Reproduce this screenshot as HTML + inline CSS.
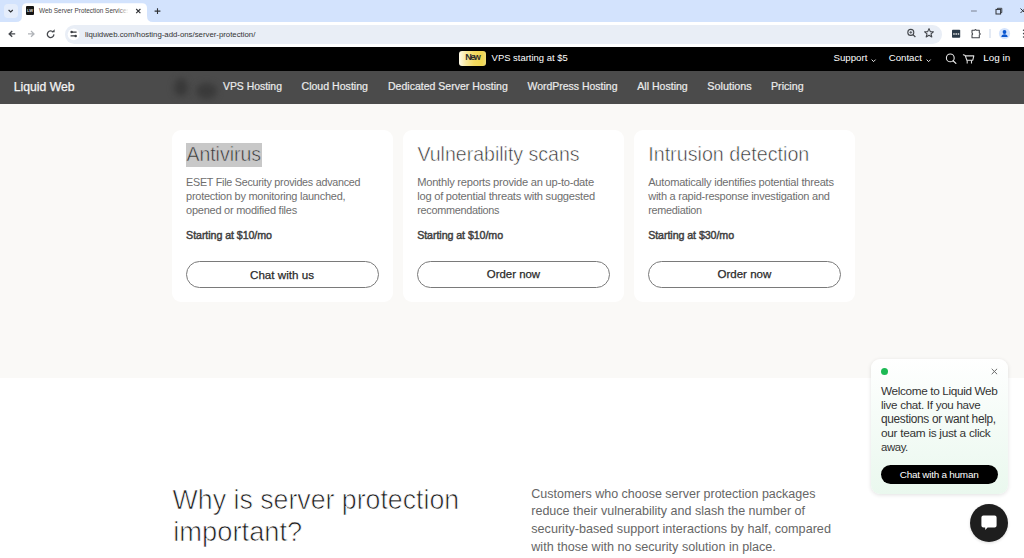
<!DOCTYPE html>
<html><head><meta charset="utf-8"><style>
html,body{margin:0;padding:0;width:1024px;height:558px;overflow:hidden;background:#fff;position:relative;font-family:"Liberation Sans",sans-serif}
.t{position:absolute;white-space:nowrap;font-family:"Liberation Sans",sans-serif}
.a{position:absolute}
</style></head><body>
<!-- tab strip -->
<div class="a" style="left:0;top:0;width:1024px;height:22px;background:#d3e3fd"></div>
<div class="a" style="left:3.5px;top:3.5px;width:14.5px;height:14.5px;border-radius:4px;background:#e5edfb"></div>
<svg class="a" style="left:0;top:0" width="1024" height="24">
  <path d="M8.6 10 L10.7 12 L12.8 10" fill="none" stroke="#2d2f33" stroke-width="1.1"/>
  <!-- tab shape -->
  <path d="M16 22 Q22 22 22 16 L22 8 Q22 3.2 27 3.2 L142 3.2 Q147 3.2 147 8 L147 16 Q147 22 153 22 Z" fill="#fff"/>
  <!-- close x -->
  <path d="M136.2 9 L140.4 13.2 M140.4 9 L136.2 13.2" stroke="#303236" stroke-width="1.1"/>
  <!-- plus -->
  <path d="M157.5 8.2 V14 M154.6 11.1 H160.4" stroke="#303236" stroke-width="1.1"/>
  <!-- window controls -->
  <path d="M971 11 H976.8" stroke="#7a8190" stroke-width="1"/>
  <rect x="996" y="9.4" width="4.6" height="4.6" fill="none" stroke="#303236" stroke-width="1"/>
  <path d="M997.5 9.4 V8.3 H1001.8 V12.6 H1000.6" fill="none" stroke="#303236" stroke-width="0.9"/>
  <path d="M1020.5 8.5 L1025 13 M1025 8.5 L1020.5 13" stroke="#303236" stroke-width="1"/>
</svg>
<div class="a" style="left:25.7px;top:6.4px;width:8.6px;height:8.5px;background:#141414;border-radius:1px"></div>
<div class="a" style="left:25.7px;top:8.2px;width:8.6px;font-size:4px;line-height:5px;color:#ddd;text-align:center;font-family:'Liberation Sans',sans-serif;font-weight:bold">LW</div>
<div class="a" style="left:118px;top:4px;width:14px;height:14px;background:linear-gradient(to right,rgba(255,255,255,0),#fff 75%);z-index:5"></div>
<!-- toolbar -->
<div class="a" style="left:0;top:22px;width:1024px;height:24.5px;background:#fff"></div>
<div class="a" style="left:65.2px;top:25px;width:876.7px;height:18.6px;border-radius:9.3px;background:#e9eef6"></div>
<svg class="a" style="left:0;top:22px" width="1024" height="25">
  <!-- back -->
  <path d="M15.2 11.9 H9.4 M12.2 9 L9.2 11.9 L12.2 14.8" fill="none" stroke="#45484d" stroke-width="1.4"/>
  <path d="M28 11.9 H33.8 M31 9 L34 11.9 L31 14.8" fill="none" stroke="#b0b3b8" stroke-width="1.3"/>
  <!-- reload -->
  <path d="M53.2 10.2 A3.3 3.3 0 1 0 53.9 12.4" fill="none" stroke="#45484d" stroke-width="1.3"/>
  <path d="M51.6 10.3 L54.6 10.3 L54.6 7.3 Z" fill="#45484d"/>
  <!-- site info -->
  <circle cx="73.6" cy="12.3" r="5.9" fill="#fff"/>
  <path d="M71.2 10.1 H76.6 M70.6 13.9 H75.8" stroke="#3a3c40" stroke-width="1.1"/>
  <circle cx="71.6" cy="10.1" r="1.25" fill="#3a3c40"/>
  <circle cx="75.7" cy="13.9" r="1.25" fill="#3a3c40"/>
  <!-- zoom -->
  <circle cx="910.8" cy="10.4" r="3" fill="none" stroke="#43464b" stroke-width="1.1"/>
  <path d="M913 12.6 L915.4 15" stroke="#43464b" stroke-width="1.2"/>
  <path d="M909.4 10.4 H912.2 M910.8 9 V11.8" stroke="#43464b" stroke-width="0.8"/>
  <!-- star -->
  <path d="M929 6.6 L930.3 9.6 L933.4 9.8 L931 11.9 L931.8 15 L929 13.3 L926.2 15 L927 11.9 L924.6 9.8 L927.7 9.6 Z" fill="none" stroke="#43464b" stroke-width="1.1" stroke-linejoin="round"/>
  <!-- ext -->
  <rect x="952" y="7.8" width="8.2" height="7.9" rx="0.8" fill="#2b3a48"/>
  <path d="M953.2 11.9 H959.2" stroke="#e6e6e6" stroke-width="1.5" stroke-dasharray="1.5 0.75"/>
  <!-- puzzle -->
  <path d="M972 8.3 H974.7 Q975.5 6.9 976.3 8.3 H979.3 V11 Q981.2 11.95 979.3 12.9 V15.7 H972 V12.8 Q973.3 11.95 972 11.1 Z" fill="none" stroke="#43464b" stroke-width="1.05" stroke-linejoin="round"/>
  <path d="M990 7 V16" stroke="#c9d6ea" stroke-width="1"/>
  <!-- profile -->
  <circle cx="1004.5" cy="11.5" r="5.6" fill="#d3e3fd"/>
  <circle cx="1004.5" cy="10" r="1.9" fill="#0b57d0"/>
  <path d="M1001.3 14.9 Q1001.6 12.4 1004.5 12.3 Q1007.4 12.4 1007.7 14.9 Z" fill="#0b57d0"/>
  <circle cx="1023.6" cy="8.2" r="0.8" fill="#43464b"/>
  <circle cx="1023.6" cy="11.6" r="0.8" fill="#43464b"/>
  <circle cx="1023.6" cy="15" r="0.8" fill="#43464b"/>
</svg>
<!-- promo bar -->
<div class="a" style="left:0;top:46.5px;width:1024px;height:24.5px;background:#000"></div>
<div class="a" style="left:459.3px;top:50.6px;width:26.8px;height:15.2px;border-radius:3px;background:linear-gradient(90deg,#fffbea 0%,#f9e9a0 25%,#f4da62 55%,#f0d650 85%,#eedc78 100%)"></div>
<svg class="a" style="left:860px;top:50px" width="164" height="20">
  <path d="M11.6 9.6 L13.6 11.6 L15.6 9.6" fill="none" stroke="#fff" stroke-width="0.9"/>
  <path d="M66.6 9.6 L68.6 11.6 L70.6 9.6" fill="none" stroke="#fff" stroke-width="0.9"/>
  <circle cx="90.3" cy="7.9" r="3.9" fill="none" stroke="#e8e8e8" stroke-width="1.1"/>
  <path d="M93.1 10.7 L95.9 13.4" stroke="#e8e8e8" stroke-width="1.2" stroke-linecap="round"/>
  <path d="M103.4 4.7 L105.2 5.6 L106.9 10.2 H112.8 L113.8 5.9 H105.4" fill="none" stroke="#e0e0e0" stroke-width="1.1" stroke-linejoin="round" stroke-linecap="round"/>
  <path d="M107.2 10.2 V13.4 M111.5 10.2 V13.4" stroke="#d8d8d8" stroke-width="1.1"/>
</svg>
<!-- nav -->
<div class="a" style="left:0;top:71px;width:1024px;height:32.8px;background:#4b4b4b"></div>
<div class="a" style="left:150px;top:72px;width:80px;height:31px;overflow:hidden">
  <div class="a" style="left:24px;top:6px;width:14px;height:18px;border-radius:50% 50% 45% 45%/60% 60% 40% 40%;background:#393939;filter:blur(3.2px)"></div>
  <div class="a" style="left:46px;top:11px;width:21px;height:16px;border-radius:50%;background:#3a3a3a;filter:blur(3.2px)"></div>
</div>
<!-- beige section -->
<div class="a" style="left:0;top:103.8px;width:1024px;height:274.6px;background:#faf9f7"></div>
<div class="a" style="left:172px;top:130px;width:221.3px;height:172px;border-radius:9px;background:#fff"></div>
<div class="a" style="left:403px;top:130px;width:221.3px;height:172px;border-radius:9px;background:#fff"></div>
<div class="a" style="left:634px;top:130px;width:221.3px;height:172px;border-radius:9px;background:#fff"></div>
<div class="a" style="left:185.9px;top:143px;width:76px;height:24px;background:#c8c8c8"></div>
<div class="a" style="left:185.6px;top:261px;width:193px;height:27px;box-sizing:border-box;border:1px solid #7a7a7a;border-radius:14px"></div>
<div class="a" style="left:416.6px;top:261px;width:193px;height:27px;box-sizing:border-box;border:1px solid #7a7a7a;border-radius:14px"></div>
<div class="a" style="left:647.6px;top:261px;width:193px;height:27px;box-sizing:border-box;border:1px solid #7a7a7a;border-radius:14px"></div>
<!-- chat widget -->
<div class="a" style="left:871.3px;top:358.6px;width:136.5px;height:135.2px;border-radius:9px;background:linear-gradient(180deg,#ffffff 0%,#f6fcf8 40%,#eaf8ee 100%);box-shadow:0 1px 4px rgba(0,0,0,0.12)"></div>
<div class="a" style="left:881.2px;top:367.5px;width:7px;height:7px;border-radius:50%;background:#1db954"></div>
<svg class="a" style="left:980px;top:360px" width="30" height="24">
  <path d="M11.7 8.8 L17.1 14.2 M17.1 8.8 L11.7 14.2" stroke="#6b6b6b" stroke-width="1"/>
</svg>
<div class="a" style="left:881px;top:465px;width:117px;height:19px;border-radius:10px;background:#000"></div>
<div class="a" style="left:969.6px;top:504px;width:38.2px;height:38.2px;border-radius:50%;background:#1e1e1e;box-shadow:0 1px 3px rgba(0,0,0,0.15)"></div>
<svg class="a" style="left:969.6px;top:504px" width="39" height="39">
  <path d="M13.4 11.6 H24.6 Q26.6 11.6 26.6 13.6 V21.4 Q26.6 23.4 24.6 23.4 H17.6 L15.2 26 L15.2 23.4 H13.4 Q11.4 23.4 11.4 21.4 V13.6 Q11.4 11.6 13.4 11.6 Z" fill="#fff"/>
</svg>

<div class="t" style="left:39.00px;top:8.49px;font-size:6.429px;line-height:6.429px;font-weight:400;color:#444;letter-spacing:0.000px;">Web Server Protection Services</div>
<div class="t" style="left:85.00px;top:30.70px;font-size:7.805px;line-height:7.805px;font-weight:400;color:#333;letter-spacing:0.000px;">liquidweb.com/hosting-add-ons/server-protection/</div>
<div class="t" style="left:465.30px;top:53.05px;font-size:9.104px;line-height:9.104px;font-weight:700;color:#2e2e2e;letter-spacing:-1.560px;">New</div>
<div class="t" style="left:491.60px;top:52.97px;font-size:9.454px;line-height:9.454px;font-weight:400;color:#fff;letter-spacing:0.000px;">VPS starting at $5</div>
<div class="t" style="left:833.50px;top:53.25px;font-size:9.707px;line-height:9.707px;font-weight:400;color:#fff;letter-spacing:0.000px;">Support</div>
<div class="t" style="left:888.70px;top:53.27px;font-size:9.662px;line-height:9.662px;font-weight:400;color:#fff;letter-spacing:0.000px;">Contact</div>
<div class="t" style="left:983.30px;top:53.15px;font-size:9.909px;line-height:9.909px;font-weight:400;color:#fff;letter-spacing:0.000px;">Log in</div>
<div class="t" style="left:13.70px;top:80.98px;font-size:12.237px;line-height:12.237px;font-weight:400;color:#f4f4f4;letter-spacing:0.000px;-webkit-text-stroke:0.25px #f4f4f4">Liquid Web</div>
<div class="t" style="left:223.00px;top:81.80px;font-size:10.407px;line-height:10.407px;font-weight:400;color:#ececec;letter-spacing:0.000px;-webkit-text-stroke:0.2px #ececec">VPS Hosting</div>
<div class="t" style="left:301.50px;top:80.71px;font-size:10.587px;line-height:10.587px;font-weight:400;color:#ececec;letter-spacing:0.000px;-webkit-text-stroke:0.2px #ececec">Cloud Hosting</div>
<div class="t" style="left:388.00px;top:80.73px;font-size:10.531px;line-height:10.531px;font-weight:400;color:#ececec;letter-spacing:0.000px;-webkit-text-stroke:0.2px #ececec">Dedicated Server Hosting</div>
<div class="t" style="left:527.50px;top:81.76px;font-size:10.470px;line-height:10.470px;font-weight:400;color:#ececec;letter-spacing:0.000px;-webkit-text-stroke:0.2px #ececec">WordPress Hosting</div>
<div class="t" style="left:637.30px;top:80.72px;font-size:10.565px;line-height:10.565px;font-weight:400;color:#ececec;letter-spacing:0.000px;-webkit-text-stroke:0.2px #ececec">All Hosting</div>
<div class="t" style="left:707.30px;top:80.59px;font-size:10.817px;line-height:10.817px;font-weight:400;color:#ececec;letter-spacing:0.000px;-webkit-text-stroke:0.2px #ececec">Solutions</div>
<div class="t" style="left:771.00px;top:80.67px;font-size:10.665px;line-height:10.665px;font-weight:400;color:#ececec;letter-spacing:0.000px;-webkit-text-stroke:0.2px #ececec">Pricing</div>
<div class="t" style="left:186.40px;top:144.66px;font-size:19.481px;line-height:19.481px;font-weight:400;color:#333;letter-spacing:0.000px;-webkit-text-stroke:0.55px #c8c8c8">Antivirus</div>
<div class="t" style="left:417.40px;top:144.62px;font-size:19.566px;line-height:19.566px;font-weight:400;color:#333;letter-spacing:0.000px;-webkit-text-stroke:0.55px #fff">Vulnerability scans</div>
<div class="t" style="left:648.20px;top:144.53px;font-size:19.738px;line-height:19.738px;font-weight:400;color:#333;letter-spacing:0.000px;-webkit-text-stroke:0.55px #fff">Intrusion detection</div>
<div class="t" style="left:186.10px;top:177.02px;font-size:10.768px;line-height:10.768px;font-weight:400;color:#6e6e6e;letter-spacing:-0.250px;">ESET File Security provides advanced</div>
<div class="t" style="left:186.10px;top:191.02px;font-size:10.962px;line-height:10.962px;font-weight:400;color:#6e6e6e;letter-spacing:-0.242px;">protection by monitoring launched,</div>
<div class="t" style="left:186.10px;top:205.10px;font-size:10.997px;line-height:10.997px;font-weight:400;color:#6e6e6e;letter-spacing:-0.242px;">opened or modified files</div>
<div class="t" style="left:186.10px;top:229.66px;font-size:10.682px;line-height:10.682px;font-weight:400;color:#404040;letter-spacing:-0.076px;-webkit-text-stroke:0.45px #404040">Starting at $10/mo</div>
<div class="t" style="left:417.20px;top:176.82px;font-size:11.157px;line-height:11.157px;font-weight:400;color:#6e6e6e;letter-spacing:-0.246px;">Monthly reports provide an up-to-date</div>
<div class="t" style="left:417.20px;top:190.93px;font-size:11.133px;line-height:11.133px;font-weight:400;color:#6e6e6e;letter-spacing:-0.234px;">log of potential threats with suggested</div>
<div class="t" style="left:417.20px;top:205.16px;font-size:10.885px;line-height:10.885px;font-weight:400;color:#6e6e6e;letter-spacing:-0.294px;">recommendations</div>
<div class="t" style="left:417.20px;top:229.66px;font-size:10.682px;line-height:10.682px;font-weight:400;color:#404040;letter-spacing:-0.076px;-webkit-text-stroke:0.45px #404040">Starting at $10/mo</div>
<div class="t" style="left:648.20px;top:176.84px;font-size:11.125px;line-height:11.125px;font-weight:400;color:#6e6e6e;letter-spacing:-0.227px;">Automatically identifies potential threats</div>
<div class="t" style="left:648.20px;top:191.00px;font-size:11.006px;line-height:11.006px;font-weight:400;color:#6e6e6e;letter-spacing:-0.239px;">with a rapid-response investigation and</div>
<div class="t" style="left:648.20px;top:205.18px;font-size:10.831px;line-height:10.831px;font-weight:400;color:#6e6e6e;letter-spacing:-0.270px;">remediation</div>
<div class="t" style="left:648.20px;top:229.66px;font-size:10.682px;line-height:10.682px;font-weight:400;color:#404040;letter-spacing:-0.076px;-webkit-text-stroke:0.45px #404040">Starting at $30/mo</div>
<div class="t" style="left:250.00px;top:268.88px;font-size:11.631px;line-height:11.631px;font-weight:400;color:#2a2a2a;letter-spacing:0.000px;-webkit-text-stroke:0.25px #2a2a2a">Chat with us</div>
<div class="t" style="left:486.80px;top:269.48px;font-size:11.438px;line-height:11.438px;font-weight:400;color:#2a2a2a;letter-spacing:0.000px;-webkit-text-stroke:0.25px #2a2a2a">Order now</div>
<div class="t" style="left:717.50px;top:269.44px;font-size:11.524px;line-height:11.524px;font-weight:400;color:#2a2a2a;letter-spacing:0.000px;-webkit-text-stroke:0.25px #2a2a2a">Order now</div>
<div class="t" style="left:172.60px;top:486.83px;font-size:26.730px;line-height:26.730px;font-weight:400;color:#1e1e1e;letter-spacing:0.000px;-webkit-text-stroke:0.7px #fff">Why is server protection</div>
<div class="t" style="left:173.30px;top:518.45px;font-size:27.303px;line-height:27.303px;font-weight:400;color:#1e1e1e;letter-spacing:0.000px;-webkit-text-stroke:0.7px #fff">important?</div>
<div class="t" style="left:531.25px;top:487.54px;font-size:12.510px;line-height:12.510px;font-weight:400;color:#666;letter-spacing:0.000px;">Customers who choose server protection packages</div>
<div class="t" style="left:531.25px;top:505.43px;font-size:12.542px;line-height:12.542px;font-weight:400;color:#666;letter-spacing:0.000px;">reduce their vulnerability and slash the number of</div>
<div class="t" style="left:531.25px;top:523.28px;font-size:12.640px;line-height:12.640px;font-weight:400;color:#666;letter-spacing:0.000px;">security-based support interactions by half, compared</div>
<div class="t" style="left:531.25px;top:541.19px;font-size:12.614px;line-height:12.614px;font-weight:400;color:#666;letter-spacing:0.000px;">with those with no security solution in place.</div>
<div class="t" style="left:881.00px;top:384.61px;font-size:11.784px;line-height:11.784px;font-weight:400;color:#333;letter-spacing:-0.351px;">Welcome to Liquid Web</div>
<div class="t" style="left:881.00px;top:398.95px;font-size:11.604px;line-height:11.604px;font-weight:400;color:#333;letter-spacing:-0.285px;">live chat. If you have</div>
<div class="t" style="left:881.00px;top:413.57px;font-size:11.863px;line-height:11.863px;font-weight:400;color:#333;letter-spacing:-0.314px;">questions or want help,</div>
<div class="t" style="left:881.00px;top:427.83px;font-size:11.832px;line-height:11.832px;font-weight:400;color:#333;letter-spacing:-0.286px;">our team is just a click</div>
<div class="t" style="left:881.00px;top:442.30px;font-size:11.401px;line-height:11.401px;font-weight:400;color:#333;letter-spacing:-0.410px;">away.</div>
<div class="t" style="left:899.80px;top:469.53px;font-size:9.948px;line-height:9.948px;font-weight:400;color:#fff;letter-spacing:-0.247px;">Chat with a human</div>
</body></html>
